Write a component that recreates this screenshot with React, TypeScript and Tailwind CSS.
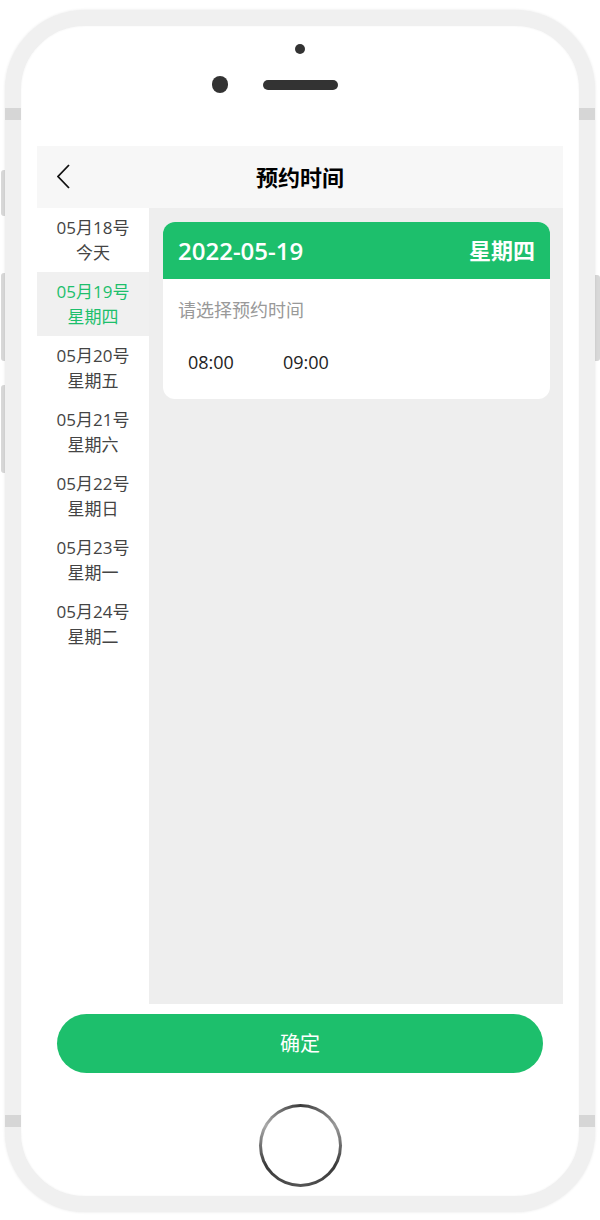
import { useState } from 'react';

const days = [
  { date: '05月18号', label: '今天' },
  { date: '05月19号', label: '星期四' },
  { date: '05月20号', label: '星期五' },
  { date: '05月21号', label: '星期六' },
  { date: '05月22号', label: '星期日' },
  { date: '05月23号', label: '星期一' },
  { date: '05月24号', label: '星期二' },
];

const times = ['08:00', '09:00'];

export default function App() {
  const [active, setActive] = useState(1);

  return (
    <div
      className="relative w-[600px] h-[1220px] bg-white overflow-hidden"
      style={{ fontFamily: '"Open Sans", "Noto Sans CJK SC", sans-serif' }}
    >
      {/* side buttons */}
      <div className="absolute left-[1px] top-[170px] w-[8px] h-[46px] rounded-[3px] bg-[#d8d8d8]" />
      <div className="absolute left-[1px] top-[273px] w-[8px] h-[88px] rounded-[3px] bg-[#d8d8d8]" />
      <div className="absolute left-[1px] top-[385px] w-[8px] h-[88px] rounded-[3px] bg-[#d8d8d8]" />
      <div className="absolute right-[0px] top-[275px] w-[9px] h-[86px] rounded-[3px] bg-[#d8d8d8]" />

      {/* phone body */}
      <div className="relative ml-[5px] mt-[10px] w-[590px] h-[1202px] rounded-[80px] border-[16px] border-[#f0f0f0] bg-white shadow-[0_0_3px_rgba(0,0,0,0.1),inset_0_0_2px_rgba(0,0,0,0.06)] flex flex-col">
        {/* antenna bands */}
        <div className="absolute -left-[16px] top-[82px] w-[16px] h-[12px] bg-[#d6d6d6]" />
        <div className="absolute -right-[16px] top-[82px] w-[16px] h-[12px] bg-[#d6d6d6]" />
        <div className="absolute -left-[16px] top-[1089px] w-[16px] h-[12px] bg-[#d6d6d6]" />
        <div className="absolute -right-[16px] top-[1089px] w-[16px] h-[12px] bg-[#d6d6d6]" />

        {/* top: camera + speaker */}
        <div className="h-[120px] flex flex-col items-center">
          <div className="mt-[18px] w-[10px] h-[10px] rounded-full bg-[#333]" />
          <div className="mt-[22px] w-full grid grid-cols-[1fr_auto_1fr] items-center">
            <div className="flex justify-end">
              <div className="mr-[35px] w-[16px] h-[17px] rounded-full bg-[#333]" />
            </div>
            <div className="w-[75px] h-[10px] rounded-full bg-[#333]" />
            <div />
          </div>
        </div>

        {/* screen */}
        <div className="mx-[16px] flex flex-col">
          <div className="h-[62px] bg-[#f7f7f7] flex items-center relative">
            <svg className="absolute left-[20px]" width="14" height="26" viewBox="0 0 14 26" fill="none">
              <polyline points="12,1 1,12.5 12,24" stroke="#111" strokeWidth="1.8" />
            </svg>
            <div className="flex-1 text-center text-[22px] font-bold text-black">预约时间</div>
          </div>

          <div className="h-[796px] flex">
            <div className="w-[112px] bg-white">
              {days.map((d, i) => (
                <div
                  key={d.date}
                  onClick={() => setActive(i)}
                  className={
                    i === active
                      ? 'h-[64px] flex flex-col items-center justify-center leading-[25px] text-[17px] text-[#1dbf6c] bg-[#f0f0f0]'
                      : 'h-[64px] flex flex-col items-center justify-center leading-[25px] text-[17px] text-[#444]'
                  }
                >
                  <span>{d.date}</span>
                  <span>{d.label}</span>
                </div>
              ))}
            </div>

            <div className="flex-1 bg-[#eeeeee] pt-[14px] pl-[14px] pr-[13px]">
              <div className="rounded-[12px] bg-white overflow-hidden">
                <div className="h-[57px] bg-[#1dbf6c] flex items-center justify-between px-[15px] text-white">
                  <span className="text-[24px] font-semibold">2022-05-{days[active].date.slice(3, 5)}</span>
                  <span className="text-[22px] font-bold">{days[active].label === '今天' ? '星期三' : days[active].label}</span>
                </div>
                <div className="pt-[19px] pb-[25px]">
                  <div className="pl-[15px] text-[18px] leading-[24px] text-[#999]">请选择预约时间</div>
                  <div className="mt-[28px] pl-[25px] flex">
                    {times.map((t) => (
                      <div key={t} className="w-[95px] text-[18px] leading-[24px] text-[#222]">
                        {t}
                      </div>
                    ))}
                  </div>
                </div>
              </div>
            </div>
          </div>

          <div className="pt-[10px] px-[20px]">
            <button className="w-full h-[59px] rounded-full bg-[#1dbf6c] text-white text-[20px]">确定</button>
          </div>
        </div>

        {/* home button */}
        <div className="mt-[31px] flex justify-center">
          <div className="w-[83px] h-[83px] rounded-full p-[3px] bg-[conic-gradient(#3a3a3a,#9a9a9a,#3a3a3a,#555,#3a3a3a,#aaa,#3a3a3a)]">
            <div className="w-full h-full rounded-full bg-white" />
          </div>
        </div>
      </div>
    </div>
  );
}
